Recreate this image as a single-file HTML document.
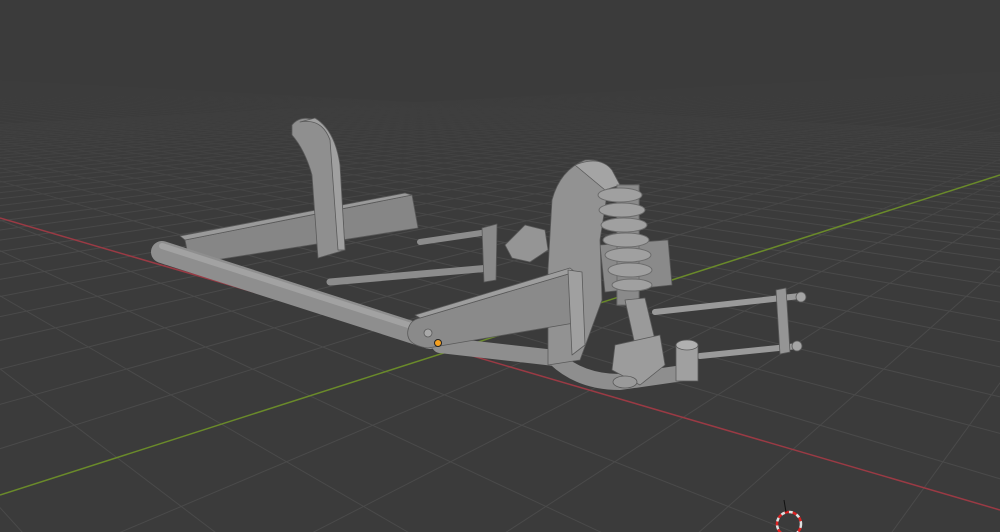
<!DOCTYPE html>
<html><head><style>html,body{margin:0;padding:0;background:#3b3b3b;overflow:hidden;width:1000px;height:532px;position:relative}svg{display:block;position:absolute;left:0;top:0}</style></head>
<body>
<svg id="s" width="1000" height="532" viewBox="0 0 1000 532" xmlns="http://www.w3.org/2000/svg">
<defs><linearGradient id="fade" x1="0" y1="0" x2="0" y2="1"><stop offset="0" stop-color="#3b3b3b" stop-opacity="1"/><stop offset="0.4" stop-color="#3b3b3b" stop-opacity="0.9"/><stop offset="1" stop-color="#3b3b3b" stop-opacity="0"/></linearGradient></defs>
<rect width="1000" height="532" fill="#3b3b3b"/>
<g id="grid" stroke="#4a4a4a" stroke-width="1" fill="none"></g>
<rect x="0" y="0" width="1000" height="240" fill="url(#fade)"/>
<line x1="0" y1="218" x2="1000" y2="510" stroke="#9a3a44" stroke-width="1.5"/>
<line x1="0" y1="495" x2="1000" y2="175" stroke="#6a8a2a" stroke-width="1.5"/>
<g stroke="#5a5a5a" stroke-width="0.8" stroke-linejoin="round">
<polygon points="185,240 412,195 418,228 190,264" fill="#868686"/>
<polygon points="185,240 412,195 405,193 180,236" fill="#9a9a9a"/>
<path d="M292,125 Q300,115 315,120 Q335,135 340,170 L345,250 L318,258 L312,175 Q305,150 292,135 Z" fill="#8f8f8f"/>
<path d="M300,122 Q322,118 330,140 L338,250 L345,250 L340,165 Q335,130 315,118 Z" fill="#a0a0a0"/>
<line x1="330" y1="282" x2="490" y2="268" stroke="#8c8c8c" stroke-width="7" stroke-linecap="round"/>
<line x1="420" y1="242" x2="488" y2="232" stroke="#8c8c8c" stroke-width="6" stroke-linecap="round"/>
<polygon points="482,228 497,224 496,280 484,282" fill="#8a8a8a"/>
<path d="M505,245 L525,225 L545,230 L548,250 L530,262 L512,258 Z" fill="#959595"/>
<line x1="162" y1="252" x2="430" y2="338" stroke="#8e8e8e" stroke-width="22" stroke-linecap="round"/>
<line x1="162" y1="246" x2="430" y2="332" stroke="#a2a2a2" stroke-width="6" stroke-linecap="round"/>
<path d="M440,345 L555,358 Q580,382 620,382 L690,372" stroke="#8e8e8e" stroke-width="16" fill="none" stroke-linecap="round"/>
<polygon points="600,245 668,240 672,285 605,292" fill="#8a8a8a"/>
<path d="M548,270 L552,200 Q560,170 585,160 Q605,158 610,175 L600,240 L602,300 L580,360 L548,365 Z" fill="#929292"/>
<path d="M575,165 Q600,155 612,170 L620,185 L605,190 Z" fill="#a4a4a4"/>
<g stroke="#6c6c6c" stroke-width="1">
<rect x="617" y="185" width="22" height="120" fill="#8a8a8a"/>
<ellipse cx="620" cy="195" rx="22" ry="7" fill="#a0a0a0"/>
<ellipse cx="622" cy="210" rx="23" ry="7" fill="#a0a0a0"/>
<ellipse cx="624" cy="225" rx="23" ry="7" fill="#a0a0a0"/>
<ellipse cx="626" cy="240" rx="23" ry="7" fill="#a0a0a0"/>
<ellipse cx="628" cy="255" rx="23" ry="7" fill="#a0a0a0"/>
<ellipse cx="630" cy="270" rx="22" ry="7" fill="#a0a0a0"/>
<ellipse cx="632" cy="285" rx="20" ry="6" fill="#a0a0a0"/>
</g>
<polygon points="625,300 645,298 655,340 635,345" fill="#9a9a9a"/>
<path d="M615,345 L660,335 L665,365 L640,385 L612,370 Z" fill="#9c9c9c"/>
<path d="M420,318 L575,272 L580,322 L428,348 Q405,345 408,330 Q410,320 420,318 Z" fill="#8a8a8a"/>
<path d="M420,318 L575,272 L570,268 L415,315 Z" fill="#9e9e9e"/>
<polygon points="568,270 582,272 585,345 572,355" fill="#a0a0a0"/>
<circle cx="428" cy="333" r="4" fill="#a8a8a8"/>
<line x1="655" y1="312" x2="800" y2="296" stroke="#9a9a9a" stroke-width="6" stroke-linecap="round"/>
<line x1="700" y1="356" x2="798" y2="346" stroke="#9a9a9a" stroke-width="6" stroke-linecap="round"/>
<polygon points="776,290 786,288 790,352 780,354" fill="#959595"/>
<circle cx="801" cy="297" r="5" fill="#a4a4a4"/>
<circle cx="797" cy="346" r="5" fill="#a4a4a4"/>
<rect x="676" y="345" width="22" height="36" fill="#a0a0a0"/>
<ellipse cx="687" cy="345" rx="11" ry="5" fill="#b0b0b0"/>
<ellipse cx="625" cy="382" rx="12" ry="6" fill="#9a9a9a"/>
</g>
<circle cx="438" cy="343" r="3.5" fill="#f5a020" stroke="#222" stroke-width="1"/>
<circle cx="789" cy="524" r="12" fill="none" stroke="#e0e0e0" stroke-width="2.5" stroke-dasharray="4 4"/>
<circle cx="789" cy="524" r="12" fill="none" stroke="#d22" stroke-width="2.5" stroke-dasharray="4 4" stroke-dashoffset="4"/>
<line x1="784" y1="500" x2="786" y2="512" stroke="#111" stroke-width="1"/>
</svg>
<script>
(function(){
var g=document.getElementById('grid'),ns='http://www.w3.org/2000/svg';
var O=[440,347],VR=[-407,60],VG=[1234,60],k=14;
function P(V,t){var f=t/(t+k);return [O[0]+(V[0]-O[0])*f,O[1]+(V[1]-O[1])*f];}
function add(V,a){var dx=a[0]-V[0],dy=a[1]-V[1];var l=document.createElementNS(ns,'line');
 l.setAttribute('x1',V[0]);l.setAttribute('y1',V[1]);
 l.setAttribute('x2',a[0]+dx*50);l.setAttribute('y2',a[1]+dy*50);g.appendChild(l);}
for(var t=-13;t<=40;t++){
 if(t===0)continue;
 add(VR,P(VG,t)); add(VG,P(VR,t));
}
})();
</script>
</body></html>
